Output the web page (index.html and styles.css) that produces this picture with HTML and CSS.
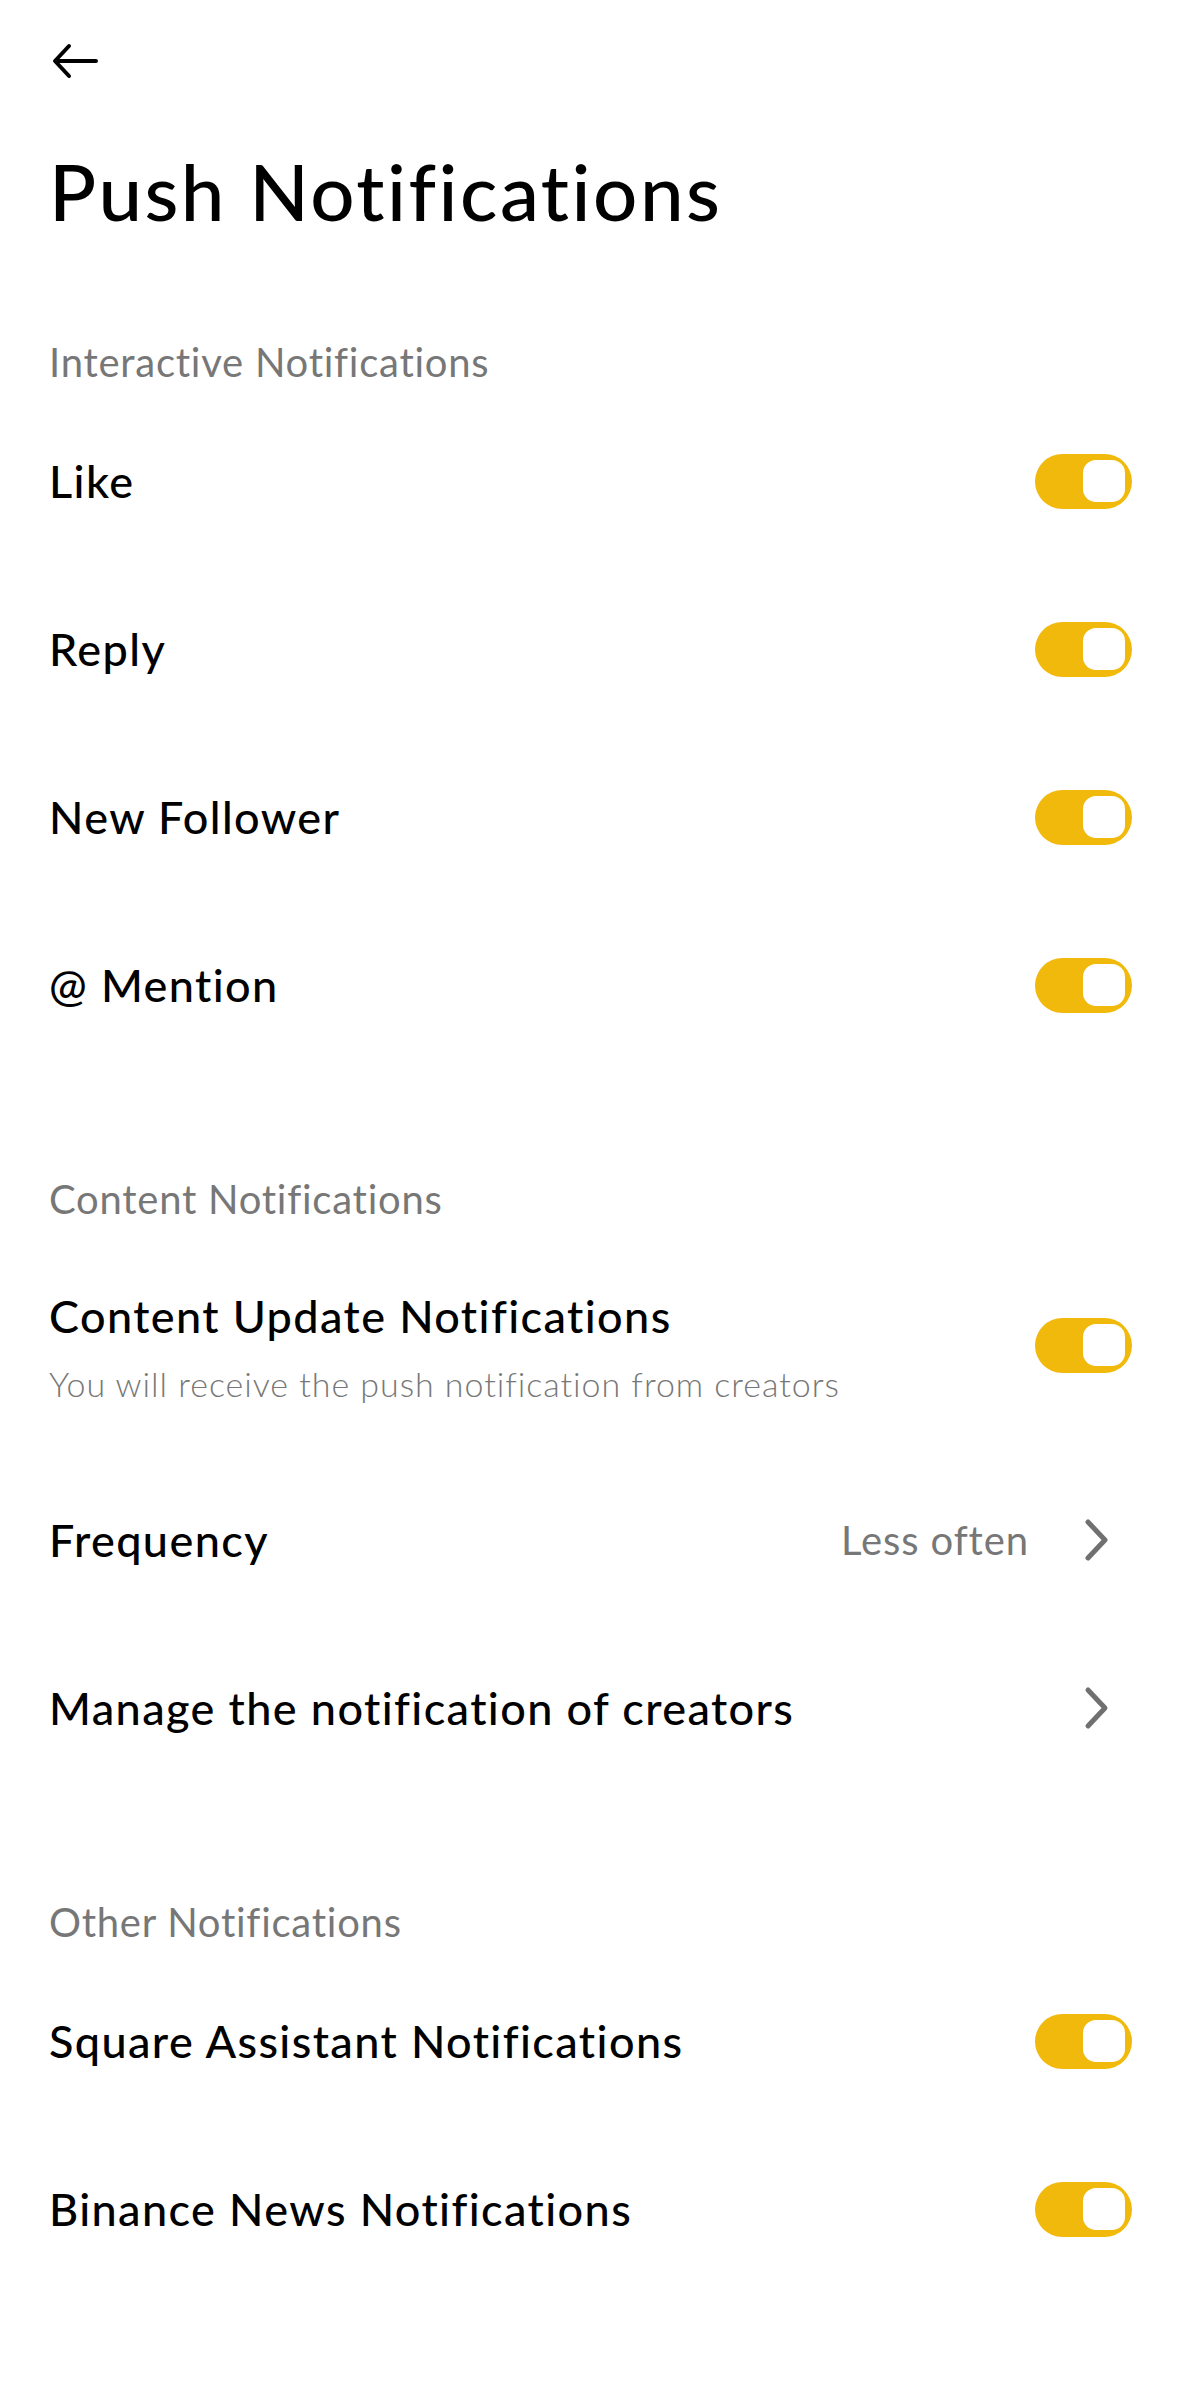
FILE: index.html
```html
<!DOCTYPE html>
<html lang="en">
<head>
  <meta charset="UTF-8" />
  <title>Push Notifications</title>
  <link rel="stylesheet" href="styles.css">
</head>
<body>

  <div class="page">
    <div class="topbar">
      <svg class="back" width="46" height="36" viewBox="0 0 46 36">
        <path d="M44 18H4M17 3L3 18L17 33" fill="none" stroke="#000" stroke-width="4" stroke-linecap="round" stroke-linejoin="round"/>
      </svg>
    </div>

    <h1>Push Notifications</h1>

    <!-- Interativas -->
    <div class="section-title first">Interactive Notifications</div>
    <div class="row">
      <span class="label">Like</span>
      <span class="toggle"><span class="knob"></span></span>
    </div>
    <div class="row">
      <span class="label">Reply</span>
      <span class="toggle"><span class="knob"></span></span>
    </div>
    <div class="row">
      <span class="label">New Follower</span>
      <span class="toggle"><span class="knob"></span></span>
    </div>
    <div class="row">
      <span class="label">@ Mention</span>
      <span class="toggle"><span class="knob"></span></span>
    </div>

    <!-- Conteúdo -->
    <div class="section-title">Content Notifications</div>
    <div class="row row-tall">
      <div class="texts">
        <span class="label">Content Update Notifications</span>
        <span class="sub">You will receive the push notification from creators</span>
      </div>
      <span class="toggle"><span class="knob"></span></span>
    </div>
    <div class="row">
      <span class="label">Frequency</span>
      <div class="right">
        <span class="value">Less often</span>
        <svg class="chev" width="26" height="44" viewBox="0 0 26 44">
          <path d="M4 4L21 22L4 40" fill="none" stroke="#707070" stroke-width="5" stroke-linecap="round" stroke-linejoin="round"/>
        </svg>
      </div>
    </div>
    <div class="row">
      <span class="label">Manage the notification of creators</span>
      <div class="right">
        <svg class="chev" width="26" height="44" viewBox="0 0 26 44">
          <path d="M4 4L21 22L4 40" fill="none" stroke="#707070" stroke-width="5" stroke-linecap="round" stroke-linejoin="round"/>
        </svg>
      </div>
    </div>

    <!-- Outras -->
    <div class="section-title">Other Notifications</div>
    <div class="row">
      <span class="label">Square Assistant Notifications</span>
      <span class="toggle"><span class="knob"></span></span>
    </div>
    <div class="row">
      <span class="label">Binance News Notifications</span>
      <span class="toggle"><span class="knob"></span></span>
    </div>
  </div>

</body>
</html>
```

FILE: styles.css
```css
body {
  font-family: Lato, 'Noto Sans', sans-serif;
  background-color: #ffffff;
  color: #000;
  margin: 0;
}

.page {
  padding: 0 47px 0 49px;
}

.topbar {
  height: 122px;
  display: flex;
  align-items: center;
}

.back {
  display: block;
  margin-left: 3px;
}

h1 {
  font-size: 78px;
  font-weight: 500;
  line-height: 94px;
  margin: 22px 0 0 0;
  letter-spacing: 2.5px;
}

.section-title {
  height: 70px;
  margin-top: 95px;
  display: flex;
  align-items: center;
  font-size: 40px;
  color: #777777;
  letter-spacing: 0.75px;
}

.section-title.first {
  margin-top: 89px;
}

.row {
  height: 168px;
  display: flex;
  align-items: center;
  justify-content: space-between;
}

.row-tall {
  height: 222px;
}

.label {
  font-size: 45px;
  font-weight: 500;
  letter-spacing: 1.4px;
}

.texts {
  display: flex;
  flex-direction: column;
  margin-top: 6px;
}

.texts .label {
  margin-top: -4px;
}

.sub {
  font-size: 34px;
  font-weight: 300;
  color: #777777;
  margin-top: 20px;
  letter-spacing: 0.95px;
}

.right {
  display: flex;
  align-items: center;
}

.value {
  font-size: 40px;
  color: #777777;
  margin-right: 55px;
  letter-spacing: 0.9px;
}

.chev {
  display: block;
  margin-right: 22px;
}

.toggle {
  width: 97px;
  height: 55px;
  border-radius: 28px;
  background-color: #f0b90b;
  display: flex;
  align-items: center;
  justify-content: flex-end;
  padding-right: 7px;
  box-sizing: border-box;
}

.knob {
  width: 42px;
  height: 42px;
  border-radius: 13px;
  background-color: #ffffff;
}
```
